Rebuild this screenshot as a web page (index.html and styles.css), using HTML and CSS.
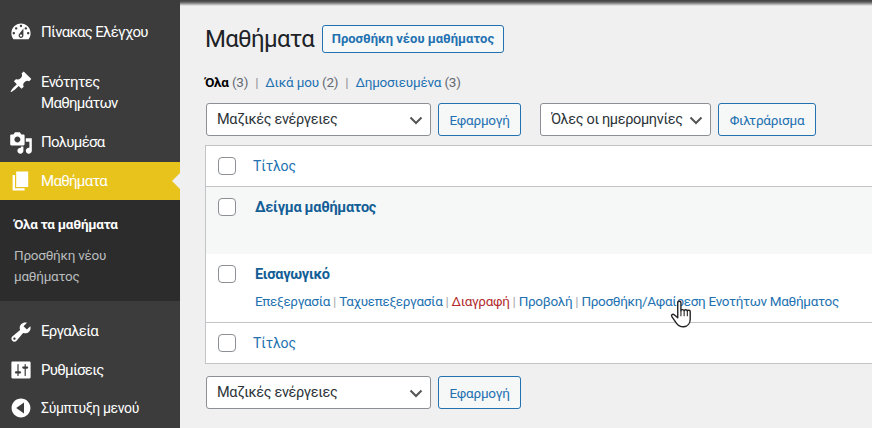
FILE: index.html
```html
<!DOCTYPE html>
<html lang="el">
<head>
<meta charset="utf-8">
<title>Μαθήματα</title>
<link rel="stylesheet" href="styles.css">
</head>
<body>
<div class="app">
  <nav class="side">
    <a class="item dash"><svg class="ico" viewBox="0 0 20 20"><path d="M3.76 16h12.48c1.1-1.37 1.76-3.11 1.76-5 0-4.42-3.58-8-8-8s-8 3.58-8 8c0 1.89.66 3.63 1.76 5zM10 4c.55 0 1 .45 1 1s-.45 1-1 1-1-.45-1-1 .45-1 1-1zM6 6c.55 0 1 .45 1 1s-.45 1-1 1-1-.45-1-1 .45-1 1-1zm8 0c.55 0 1 .45 1 1s-.45 1-1 1-1-.45-1-1 .45-1 1-1zm-5.37 5.55L12 7v6c0 1.1-.9 2-2 2s-2-.9-2-2c0-.57.24-1.08.63-1.45zM4 10c.55 0 1 .45 1 1s-.45 1-1 1-1-.45-1-1 .45-1 1-1zm12 0c.55 0 1 .45 1 1s-.45 1-1 1-1-.45-1-1 .45-1 1-1zm-5 3c0-.55-.45-1-1-1s-1 .45-1 1 .45 1 1 1 1-.45 1-1z"/></svg><span>Πίνακας Ελέγχου</span></a>
    <a class="item pin"><svg class="ico" viewBox="0 0 20 20"><path d="M10.44 3.02l1.82-1.82 6.36 6.35-1.83 1.82c-1.05-.68-2.48-.57-3.41.36l-.75.75c-.92.93-1.04 2.35-.35 3.41l-1.83 1.82-2.41-2.41-2.8 2.79c-.42.42-3.38 2.71-3.8 2.29s1.86-3.39 2.28-3.81l2.79-2.79L4.1 9.36l1.83-1.82c1.05.69 2.48.57 3.4-.36l.75-.75c.93-.92 1.05-2.35.36-3.41z"/></svg><span>Ενότητες Μαθημάτων</span></a>
    <a class="item media"><svg class="ico" viewBox="0 0 20 20"><path fill-rule="evenodd" d="M13 11V4c0-.55-.45-1-1-1h-1.67L9 1H5L3.67 3H2c-.55 0-1 .45-1 1v7c0 .55.45 1 1 1h10c.55 0 1-.45 1-1zM7 4.500c1.380 0 2.500 1.120 2.500 2.500S8.380 9.500 7 9.500 4.500 8.380 4.500 7 5.620 4.500 7 4.500z"/><path d="M14 6h5v10.500c0 1.380-1.120 2.500-2.500 2.500S14 17.880 14 16.500s1.120-2.500 2.500-2.500c.17 0 .34.02.5.05V9h-3V6zm-4 8.050V13h2v3.500c0 1.380-1.120 2.500-2.500 2.500S7 17.880 7 16.500 8.120 14 9.500 14c.17 0 .34.02.5.05z"/></svg><span>Πολυμέσα</span></a>
    <a class="item current"><svg class="ico" viewBox="0 0 20 20"><path d="M6 15V2h10v13H6zm-1 1h8v2H3V5h2v11z"/></svg><span>Μαθήματα</span></a>
    <div class="sub">
      <a class="sub-on">Όλα τα μαθήματα</a>
      <a>Προσθήκη νέου μαθήματος</a>
    </div>
    <a class="item tools"><svg class="ico" viewBox="0 0 20 20"><path fill-rule="evenodd" d="M16.680 9.770c-1.340 1.340-3.300 1.670-4.950.99l-5.410 6.520c-.99.99-2.590.99-3.580 0s-.99-2.590 0-3.570l6.520-5.420c-.68-1.650-.35-3.610.99-4.950 1.280-1.280 3.120-1.620 4.720-1.060l-2.890 2.890 2.820 2.820 2.860-2.870c.53 1.580.18 3.390-1.080 4.650zM3.810 16.210c.4.39 1.040.39 1.430 0 .4-.4.4-1.040 0-1.430-.39-.4-1.030-.4-1.430 0-.39.39-.39 1.030 0 1.430z"/></svg><span>Εργαλεία</span></a>
    <a class="item"><svg class="ico" viewBox="0 0 20 20"><path fill-rule="evenodd" d="M18 16V4c0-.55-.45-1-1-1H3c-.55 0-1 .45-1 1v12c0 .55.45 1 1 1h14c.55 0 1-.45 1-1zM8 11h1c.55 0 1 .45 1 1s-.45 1-1 1H8v1.500c0 .28-.22.5-.5.5s-.5-.22-.5-.5V13H6c-.55 0-1-.45-1-1s.45-1 1-1h1V5.500c0-.28.22-.5.5-.5s.5.22.5.5V11zm5-2h-1c-.55 0-1-.45-1-1s.45-1 1-1h1V5.500c0-.28.22-.5.5-.5s.5.22.5.5V7h1c.55 0 1 .45 1 1s-.45 1-1 1h-1v5.500c0 .28-.22.5-.5.5s-.5-.22-.5-.5V9z"/></svg><span>Ρυθμίσεις</span></a>
    <a class="item collapse"><svg class="ico" viewBox="0 0 20 20"><path fill-rule="evenodd" d="M10 2.160c4.330 0 7.840 3.510 7.840 7.840s-3.510 7.840-7.840 7.840S2.160 14.330 2.160 10 5.670 2.160 10 2.160zM12.500 5.500L6 10l6.500 4.500z"/></svg><span>Σύμπτυξη μενού</span></a>
  </nav>
  <main class="main">
    <header class="head">
      <h1>Μαθήματα</h1>
      <a class="add">Προσθήκη νέου μαθήματος</a>
    </header>
    <ul class="views">
      <li><b>Όλα</b> <i>(3)</i></li>
      <li><a>Δικά μου</a> <i>(2)</i></li>
      <li><a>Δημοσιευμένα</a> <i>(3)</i></li>
    </ul>
    <div class="bar top">
      <select class="sel wide"><option>Μαζικές ενέργειες</option></select>
      <button class="btn apply">Εφαρμογή</button>
      <select class="sel dates"><option>Όλες οι ημερομηνίες</option></select>
      <button class="btn filter">Φιλτράρισμα</button>
    </div>
    <div class="table">
      <div class="row head-row"><input type="checkbox" class="chk"><a class="col">Τίτλος</a></div>
      <div class="row post alt"><input type="checkbox" class="chk"><div><a class="title">Δείγμα μαθήματος</a></div></div>
      <div class="row post second"><input type="checkbox" class="chk">
        <div>
          <a class="title">Εισαγωγικό</a>
          <p class="acts"><a>Επεξεργασία</a> | <a>Ταχυεπεξεργασία</a> | <a class="del">Διαγραφή</a> | <a>Προβολή</a> | <a>Προσθήκη/Αφαίρεση Ενοτήτων Μαθήματος</a></p>
        </div>
      </div>
      <div class="row foot-row"><input type="checkbox" class="chk"><a class="col">Τίτλος</a></div>
    </div>
    <div class="bar bottom">
      <select class="sel wide"><option>Μαζικές ενέργειες</option></select>
      <button class="btn apply">Εφαρμογή</button>
    </div>
  </main>
</div>
<svg class="hand" viewBox="0 0 22 30"><path fill="#fff" stroke="#222" stroke-width="1.300" stroke-linejoin="round" d="M7 4.500c0-2 3-2 3 0V12c0-1.500 3-1.500 3 0 0-1.300 3-1.300 3 .2 0-1 2.700-1 2.700.5v7c0 3.500-2 7-6 7.300-3.500.2-5.500-1.300-7-3.500L1.500 17.500c-1-1.500.8-3 2.200-1.800L7 18.500z"/><path fill="none" stroke="#222" d="M10 12v5M13 12v5M16 12v5"/></svg>
</body>
</html>
```

FILE: styles.css
```css
* { box-sizing: border-box; }
html, body { margin: 0; height: 428px; overflow: hidden; }
body { font-family: Roboto, "Noto Sans", sans-serif; font-size: 14px; color: #3c434a; background: #f0f0f1; position: relative; }
a { color: #2271b1; text-decoration: none; }
.app { display: flex; height: 428px; }

.side { width: 180px; flex: none; background: #3c3c3c; padding-top: 11px; color: #fff; }
.item { display: flex; align-items: center; gap: 8px; padding: 0 8px 0 9px; color: #fff; font-size: 15px; letter-spacing: -0.7px; line-height: 21px; height: 38px; position: relative; }
.ico { width: 24px; height: 24px; flex: none; fill: #fff; }
.dash { height: 42px; margin-bottom: 19px; }
.pin { height: 42px; margin-bottom: 9px; align-items: flex-start; }
.pin .ico { margin-top: -2px; }
.pin span { width: 100px; }
.media { height: 39px; }
.current { background: #e8c31c; }
.current::after { content: ""; position: absolute; right: 0; top: 11px; border: 8px solid transparent; border-right-color: #f0f0f1; border-left-width: 0; }
.sub { background: #2c2c2c; height: 101px; padding: 14px 14px 0; font-size: 13.500px; letter-spacing: -0.25px; line-height: 21px; margin-bottom: 11px; }
.sub a { display: block; color: #b9bcbe; }
.sub .sub-on { color: #fff; font-weight: 700; margin-bottom: 10px; }
.tools { height: 39px; }
.collapse { font-size: 14px; letter-spacing: -0.35px; }

.main { flex: 1; min-width: 0; padding: 0 0 0 25px; background: linear-gradient(#3f3f3f, #5a5a5a 2px, #f0f0f1 6px); }
.head { display: flex; align-items: center; gap: 8px; height: 34px; margin-top: 22px; }
h1 { margin: 0; font-size: 24px; letter-spacing: -0.7px; font-weight: 400; color: #1d2327; line-height: 34px; }
.add { border: 1px solid #2271b1; border-radius: 3px; height: 28px; line-height: 26px; padding: 0 8.500px; font-size: 13px; font-weight: 700; background: #f6f7f7; }

.views { display: flex; list-style: none; margin: 16px 0 0; padding: 0; font-size: 13.500px; letter-spacing: -0.2px; line-height: 20px; color: #646970; }
.views li + li::before { content: "|"; margin: 0 7px; color: #8c8f94; }
.views b { color: #000; }
.views i { font-style: normal; }

.bar { display: flex; align-items: center; }
.top { margin-top: 11px; height: 33px; }
.bottom { margin-top: 12px; height: 33px; }
.sel { appearance: none; font: inherit; font-size: 14.500px; letter-spacing: -0.35px; color: #2c3338; height: 33px; border: 1px solid #8c8f94; border-radius: 3px; padding: 0 24px 0 10px; background: #fff url("data:image/svg+xml,%3Csvg xmlns='http://www.w3.org/2000/svg' width='16' height='16'%3E%3Cpath d='M2.500 5.500L8 11l5.500-5.500' fill='none' stroke='%23555' stroke-width='2'/%3E%3C/svg%3E") no-repeat right 6px center; }
.wide { width: 225px; margin-left: 1px; }
.dates { width: 171px; margin-left: 19px; }
.btn { font: inherit; font-size: 13.500px; letter-spacing: -0.25px; height: 33px; border: 1px solid #2271b1; border-radius: 3px; color: #2271b1; background: #f6f7f7; padding: 0; margin-left: 7px; }
.apply { width: 83px; }
.filter { width: 98px; }

.table { margin-top: 9px; background: #fff; border: 1px solid #c3c4c7; border-right: 0; }
.row { display: flex; align-items: flex-start; padding-left: 12px; gap: 17px; }
.chk { appearance: none; width: 18px; height: 18px; margin: 0; flex: none; border: 1px solid #8c8f94; border-radius: 4px; background: #fff; }
.head-row { height: 41px; padding-top: 11px; border-bottom: 1px solid #c3c4c7; }
.foot-row { height: 41px; padding-top: 11px; border-top: 1px solid #c3c4c7; }
.col { font-size: 14px; letter-spacing: -0.1px; line-height: 18px; }
.post { height: 67px; padding-top: 11px; }
.second { height: 68px; }
.alt { background: #f6f7f7; }
.title { font-size: 14.500px; letter-spacing: -0.3px; font-weight: 700; color: #135e96; line-height: 18px; display: block; margin: 1px 0 0 2px; }
.acts { margin: 8px 0 0 2px; font-size: 13.500px; letter-spacing: -0.31px; line-height: 18px; color: #a7aaad; white-space: nowrap; }
.del { color: #b32d2e; }

.hand { position: absolute; left: 670px; top: 298px; width: 24px; height: 32px; }
```
